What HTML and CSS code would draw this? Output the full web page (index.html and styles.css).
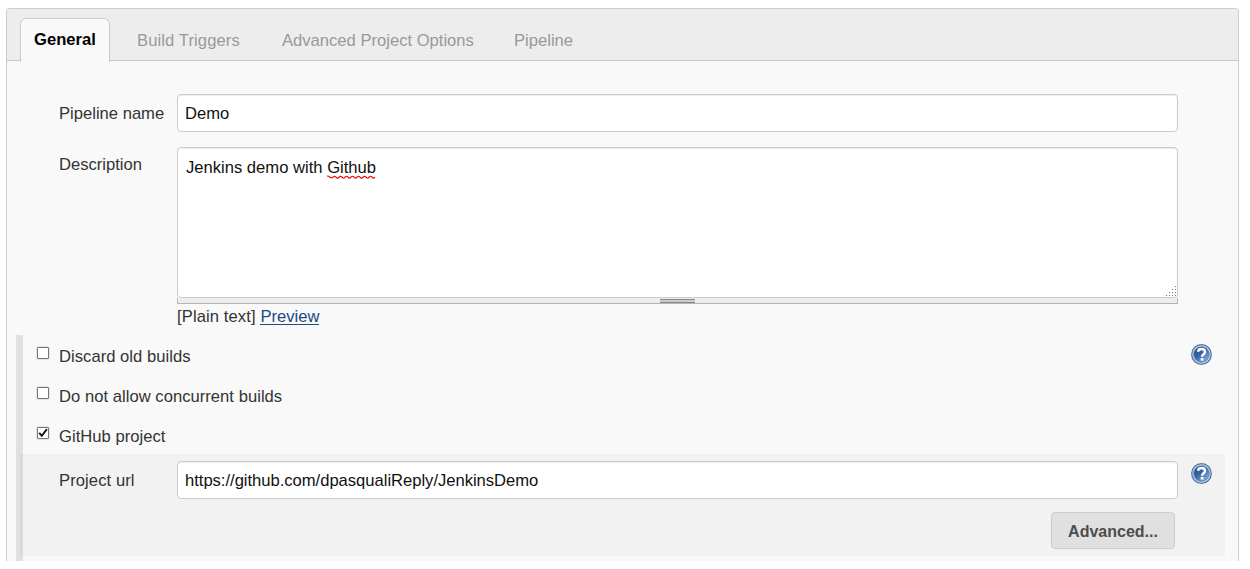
FILE: index.html
```html
<!DOCTYPE html>
<html lang="en">
<head>
<meta charset="utf-8">
<title>Demo Config</title>
<link rel="stylesheet" href="styles.css">
</head>
<body>
<svg class="defs" aria-hidden="true">
  <defs>
    <linearGradient id="ball" x1="0" y1="0" x2=".8" y2="1">
      <stop offset="0" stop-color="#1f4a8c"/>
      <stop offset=".5" stop-color="#3765a5"/>
      <stop offset="1" stop-color="#8fb3de"/>
    </linearGradient>
    <symbol id="help" viewBox="0 0 21 21">
      <circle cx="10.5" cy="10.5" r="9.8" fill="#cbd9ea" stroke="#5578ab" stroke-width="1.3"/>
      <circle cx="10.5" cy="10.5" r="7.8" fill="url(#ball)" stroke="#5b80b4" stroke-width=".8"/>
      <path d="M7.2 7.8C7.2 5.7 8.6 4.9 10.5 4.9s3.5 1 3.5 3c0 2.3-2.9 2.5-2.9 4.8" fill="none" stroke="#fff" stroke-width="2.5"/>
      <rect x="9.7" y="14" width="2.8" height="2.6" fill="#fff"/>
    </symbol>
  </defs>
</svg>
<main class="panel">
  <nav class="tabs">
    <a class="tab active">General</a>
    <a class="tab t-triggers">Build Triggers</a>
    <a class="tab t-options">Advanced Project Options</a>
    <a class="tab t-pipeline">Pipeline</a>
  </nav>
  <form class="form">
    <div class="row">
      <label class="label name-label">Pipeline name</label>
      <div class="field">Demo</div>
    </div>
    <div class="row description">
      <label class="label desc-label">Description</label>
      <div>
        <div class="field area">Jenkins demo with <span class="misspelt">Github<svg class="wave" width="50" height="4" viewBox="0 0 50 4"><path d="M0 1q1.5 0 3 1.2t3 0q1.5-2 3 0t3 0q1.5-2 3 0t3 0q1.5-2 3 0t3 0q1.5-2 3 0t3 0q1.5-2 3 0t3 0q1.5-2 3 0t3 0q1.5-2 3 0t3 0"/></svg></span>
          <svg class="grip" width="10" height="10" viewBox="0 0 10 10"><path d="M9 0h1v1H9zM6 3h1v1H6zM9 3h1v1H9zM3 6h1v1H3zM6 6h1v1H6zM9 6h1v1H9zM0 9h1v1H0zM3 9h1v1H3zM6 9h1v1H6zM9 9h1v1H9z"/></svg>
        </div>
        <div class="handle"><span class="knob"></span></div>
        <div class="format">[Plain text] <a class="preview">Preview</a></div>
      </div>
    </div>
    <section class="options">
      <div class="option"><span class="check"></span><span class="caption">Discard old builds</span><svg class="help"><use href="#help"/></svg></div>
      <div class="option"><span class="check"></span><span class="caption">Do not allow concurrent builds</span></div>
      <div class="option last"><span class="check"><svg width="10" height="10" viewBox="0 0 10 10"><path d="M1.2 4.8l2.6 3L8.9 1.2" fill="none" stroke="#111" stroke-width="1.9"/></svg></span><span class="caption">GitHub project</span></div>
      <div class="nested">
        <div class="row url">
          <label class="label url-label">Project url</label>
          <div class="field address">https://github.com/dpasqualiReply/JenkinsDemo</div>
          <svg class="help"><use href="#help"/></svg>
        </div>
        <div class="actions"><span class="button">Advanced...</span></div>
      </div>
    </section>
  </form>
</main>
</body>
</html>
```
FILE: styles.css
```css
* { box-sizing: border-box; }
body {
  margin: 0;
  padding: 8px 11px 8px 6px;
  background: #fff;
  color: #333;
  font: 16.6px/22px "Liberation Sans", Arial, sans-serif;
}
.defs { position: absolute; width: 0; height: 0; }
.panel {
  height: 553px;
  border: 1px solid #ccc;
  border-bottom: 0;
  border-radius: 4px 4px 0 0;
  background: #f9f9f9;
}
.tabs {
  display: flex;
  height: 52px;
  padding: 9px 0 0 13px;
  border-bottom: 1px solid #c8c8c8;
  border-radius: 3px 3px 0 0;
  background: #ededed;
}
.tab { padding-top: 12px; color: #999; white-space: nowrap; }
.active {
  width: 90px;
  height: 44px;
  padding: 10px 0 0 13px;
  border: 1px solid #ccc;
  border-bottom: 0;
  border-radius: 6px 6px 0 0;
  background: #f9f9f9;
  color: #000;
  font-weight: bold;
}
.t-triggers { margin-left: 27px; width: 145px; letter-spacing: .1px; }
.t-options { width: 232px; }
.form { padding: 33px 0 0 9px; }
.row {
  display: grid;
  grid-template-columns: 118px 1001px auto;
  padding-left: 43px;
  align-items: start;
}
.name-label { padding-top: 9px; }
.desc-label { padding-top: 7px; }
.url-label { padding-top: 9px; letter-spacing: .08px; }
.label { white-space: nowrap; }
.field {
  height: 38px;
  padding: 8px 7px;
  border: 1px solid #ccc;
  border-radius: 4px;
  background: #fff;
  box-shadow: inset 0 1px 1px rgba(0, 0, 0, .075);
  color: #111;
  white-space: nowrap;
}
.address { letter-spacing: -.02px; }
.description { margin-top: 15px; }
.area { position: relative; height: 151px; padding: 9px 8px; }
.misspelt { position: relative; }
.wave { position: absolute; left: 0; bottom: -2px; fill: none; stroke: #e00; stroke-width: 1.1; }
.grip { position: absolute; right: 1px; bottom: 1px; fill: #777; }
.handle {
  display: flex;
  justify-content: center;
  height: 6px;
  padding: 1px 0 0;
  border: 1px solid #b5b5b5;
  border-top: 0;
  background: #ededed;
}
.knob { width: 35px; height: 4px; border: 1px solid #888; border-width: 1px 0; background: #ccc; }
.format { height: 31px; padding-top: 2px; letter-spacing: .1px; }
.preview { color: #204a87; border-bottom: 1px solid #204a87; display: inline-block; height: 19px; letter-spacing: 0; }
.options { height: 226px; border-left: 7px solid #e0e0e0; }
.option { display: flex; height: 40px; padding-left: 14px; }
.last { height: 39px; }
.check {
  width: 12px;
  height: 12px;
  margin-top: 12px;
  border: 1px solid #777;
  border-radius: 1px;
  background: #fff;
  box-shadow: 0 0 0 1px #e4e4e0;
}
.check svg { display: block; }
.caption { width: 1132px; margin: 11px 0 0 10px; letter-spacing: .03px; }
.help { width: 21px; height: 21px; margin-top: 9px; flex: none; }
.nested {
  width: 1205px;
  height: 102px;
  margin-left: -3px;
  padding-top: 7px;
  background: rgba(0, 0, 0, .028);
}
.url { padding-left: 39px; }
.url .help { margin: 2px 0 0 13px; }
.actions { display: flex; justify-content: flex-end; padding: 13px 50px 0 0; }
.button {
  width: 124px;
  height: 37px;
  padding-top: 8px;
  border: 1px solid #ccc;
  border-radius: 4px;
  background: #e0e0e0;
  color: #4d4d4d;
  font-size: 16px;
  font-weight: bold;
  text-align: center;
}
```
